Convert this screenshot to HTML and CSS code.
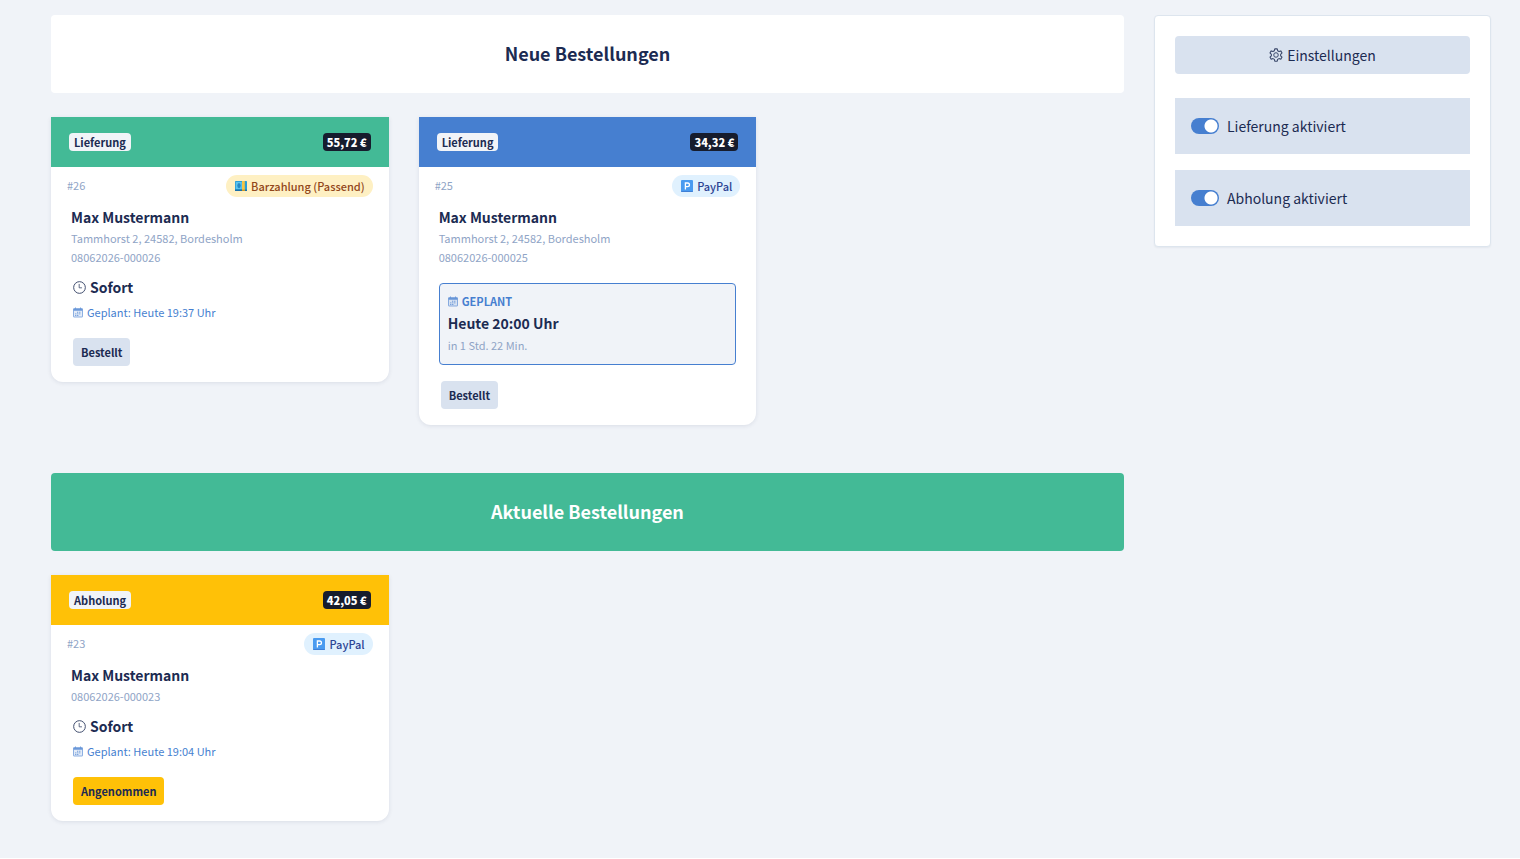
FILE: index.html
```html
<!DOCTYPE html>
<html lang="de">
<head>
<meta charset="utf-8">
<meta name="viewport" content="width=device-width, initial-scale=1">
<title>Bestellungen</title>
<link rel="stylesheet" href="styles.css">
</head>
<body>
<svg class="sprite" aria-hidden="true">
  <symbol id="clock" viewBox="0 0 16 16"><circle cx="8" cy="8" r="7.2" fill="none" stroke="currentColor" stroke-width="1.2"/><path d="M7.6 3.6V8.4H11" fill="none" stroke="currentColor" stroke-width="1"/></symbol>
  <symbol id="calendar" viewBox="0 0 16 16"><rect x=".8" y="1.8" width="14.4" height="13.4" rx=".6" fill="currentColor" fill-opacity=".18" stroke="currentColor" stroke-width="1.2"/><path d="M1 2h14v3.2H1z" fill="currentColor"/><path d="M4 0v3M12 0v3" stroke="currentColor" stroke-width="1.4"/><path d="M6.4 7.6h2M9.8 7.6h2M3.4 10.2h2M6.6 10.2h2M9.8 10.2h2M3.4 12.8h2M6.6 12.8h2" stroke="currentColor" stroke-width="1.5"/></symbol>
  <symbol id="gear" viewBox="0 0 16 16"><path d="M6.6 1h2.8l.5 2.1 1.5.9 2.1-.7 1.4 2.4-1.6 1.5v1.7l1.6 1.5-1.4 2.4-2.1-.7-1.5.9-.5 2.1H6.6l-.5-2.1-1.5-.9-2.1.7-1.4-2.4 1.6-1.5V7.2L1.100 5.700l1.400-2.400 2.100.7 1.500-.9z" fill="none" stroke="currentColor" stroke-width="1.2" stroke-linejoin="round"/><circle cx="8" cy="8" r="2.600" fill="none" stroke="currentColor" stroke-width="1.100"/></symbol>
  <symbol id="note" viewBox="0 0 12 10"><rect width="12" height="10" rx=".6" fill="#2a9fd8"/><path d="M0 8.600h12V10H0z" fill="#1b6fa8"/><path d="M.8 1h6v7h-6z" fill="#5cc3ee"/><ellipse cx="4" cy="4.600" rx="1.700" ry="2.600" fill="#2589c4"/><path d="M7 0h2.800v10H7z" fill="#f6c644"/><path d="M7 8.600h2.800V10H7z" fill="#c99724"/></symbol>
  <symbol id="parking" viewBox="0 0 12 12"><rect width="12" height="12" rx="1" fill="#4a9bf0"/><path d="M0 11h12v0a1 1 0 0 1-1 1H1a1 1 0 0 1-1-1z" fill="#3f7fd6"/><path d="M4.400 9.400V3h2.200a1.800 1.800 0 0 1 0 3.700H4.400" fill="none" stroke="#fff" stroke-width="1.300"/></symbol>
</svg>
<div class="page">
  <main class="orders">
    <section class="group">
      <h2 class="banner">Neue Bestellungen</h2>
      <div class="cards">
        <article class="card">
          <header class="card-head green"><span class="chip">Lieferung</span><span class="chip price">55,72 €</span></header>
          <div class="meta"><span>#26</span><span class="pay cash"><svg class="note"><use href="#note"/></svg>Barzahlung (Passend)</span></div>
          <div class="body">
            <h3 class="name">Max Mustermann</h3>
            <p class="info">Tammhorst 2, 24582, Bordesholm</p>
            <p class="info">08062026-000026</p>
            <p class="when"><svg class="clock"><use href="#clock"/></svg>Sofort</p>
            <p class="plan"><svg class="cal"><use href="#calendar"/></svg>Geplant: Heute 19:37 Uhr</p>
            <button class="status" type="button">Bestellt</button>
          </div>
        </article>
        <article class="card">
          <header class="card-head blue"><span class="chip">Lieferung</span><span class="chip price">34,32 €</span></header>
          <div class="meta"><span>#25</span><span class="pay paypal"><svg class="parking"><use href="#parking"/></svg>PayPal</span></div>
          <div class="body">
            <h3 class="name">Max Mustermann</h3>
            <p class="info">Tammhorst 2, 24582, Bordesholm</p>
            <p class="info">08062026-000025</p>
            <div class="slot">
              <p class="slot-label"><svg class="cal"><use href="#calendar"/></svg>GEPLANT</p>
              <p class="slot-time">Heute 20:00 Uhr</p>
              <p class="slot-rest">in 1 Std. 22 Min.</p>
            </div>
            <button class="status" type="button">Bestellt</button>
          </div>
        </article>
      </div>
    </section>
    <section class="group">
      <h2 class="banner current">Aktuelle Bestellungen</h2>
      <div class="cards">
        <article class="card">
          <header class="card-head yellow"><span class="chip">Abholung</span><span class="chip price">42,05 €</span></header>
          <div class="meta"><span>#23</span><span class="pay paypal"><svg class="parking"><use href="#parking"/></svg>PayPal</span></div>
          <div class="body">
            <h3 class="name">Max Mustermann</h3>
            <p class="info">08062026-000023</p>
            <p class="when"><svg class="clock"><use href="#clock"/></svg>Sofort</p>
            <p class="plan"><svg class="cal"><use href="#calendar"/></svg>Geplant: Heute 19:04 Uhr</p>
            <button class="status accepted" type="button">Angenommen</button>
          </div>
        </article>
      </div>
    </section>
  </main>
  <aside class="panel">
    <button class="settings" type="button"><svg class="gear"><use href="#gear"/></svg>Einstellungen</button>
    <div class="toggles">
      <label class="toggle"><input type="checkbox" role="switch" checked>Lieferung aktiviert</label>
      <label class="toggle"><input type="checkbox" role="switch" checked>Abholung aktiviert</label>
    </div>
  </aside>
</div>
</body>
</html>
```
FILE: styles.css
```css
* { box-sizing: border-box; }
body, h2, h3, p { margin: 0; }
body {
  background: #fff;
  color: #1c2b52;
  font-family: "Noto Sans CJK SC", "Noto Sans", sans-serif;
  font-size: 14px;
}
button { border: 0; color: inherit; font-family: inherit; cursor: pointer; }
svg { flex: none; }
.sprite { position: absolute; width: 0; height: 0; }

.page {
  display: flex;
  align-items: flex-start;
  gap: 30px;
  padding: 15px 29px 37px 51px;
  background: #f0f3f8;
}
.orders { flex: 1; display: grid; gap: 48px; }
.banner {
  padding: 23px 24px 25px;
  border-radius: 4px;
  background: #fff;
  font-size: 18px;
  line-height: 30px;
  text-align: center;
}
.current { background: #43ba96; color: #fff; }
.cards {
  display: grid;
  grid-template-columns: repeat(3, minmax(0, 1fr));
  align-items: start;
  gap: 30px;
  margin-top: 24px;
}

.card {
  border-radius: 0 0 12px 12px;
  background: #fff;
  box-shadow: 0 1px 4px rgba(28, 43, 82, .1);
}
.card-head {
  display: flex;
  justify-content: space-between;
  padding: 16px 18px;
}
.green { background: #43ba96; }
.blue { background: #467fd0; }
.yellow { background: #ffc107; }
.chip {
  padding: 0 5px;
  border-radius: 4px;
  background: #f1f4f8;
  font-size: 11px;
  font-weight: 700;
  line-height: 18px;
}
.price { padding: 0 4px; background: #161c2d; color: #fff; font-weight: 900; }
.meta {
  display: flex;
  justify-content: space-between;
  padding: 8px 16px 0;
  color: #8fa4c6;
  font-size: 11px;
  line-height: 20px;
}
.pay {
  display: flex;
  align-items: center;
  gap: 4px;
  padding: 0 8px 0 9px;
  border-radius: 11px;
  font-weight: 500;
  line-height: 22px;
}
.cash { background: #fef0c3; color: #92471a; }
.paypal { background: #e0f1fe; color: #2c4494; }
.note { width: 12px; height: 10px; }
.parking { width: 12px; height: 12px; }

.body { padding: 8px 20px 16px; }
.name { font-size: 14px; line-height: 24px; }
.info { color: #8fa4c6; font-size: 11px; line-height: 19px; }
.when {
  display: flex;
  align-items: center;
  gap: 4px;
  margin-top: 8px;
  padding-left: 2px;
  font-size: 14px;
  font-weight: 700;
  line-height: 24px;
}
.plan {
  display: flex;
  align-items: center;
  gap: 4px;
  margin-top: 3px;
  padding-left: 2px;
  color: #467fd0;
  font-size: 11px;
  line-height: 20px;
}
.clock { width: 13px; height: 13px; opacity: .85; }
.cal { width: 10px; height: 11px; opacity: .8; }
.status {
  display: block;
  margin: 16px 0 0 2px;
  padding: 0 8px;
  border-radius: 4px;
  background: #d9e2ef;
  font-size: 11px;
  font-weight: 700;
  line-height: 28px;
}
.accepted { background: #ffc107; }

.slot {
  margin-top: 16px;
  padding: 8px 8px 10px;
  border: 1px solid #467fd0;
  border-radius: 4px;
  background: #f0f3f8;
  line-height: 18px;
}
.slot-label {
  display: flex;
  align-items: center;
  gap: 4px;
  color: #467fd0;
  font-size: 11px;
  font-weight: 700;
}
.slot-time { font-size: 14px; font-weight: 700; line-height: 26px; }
.slot-rest { color: #8fa4c6; font-size: 11px; }

.panel {
  display: grid;
  gap: 24px;
  width: 337px;
  padding: 20px;
  border: 1px solid #dde5ee;
  border-radius: 4px;
  background: #fff;
  box-shadow: 0 1px 2px rgba(28, 43, 82, .06);
}
.settings {
  display: flex;
  align-items: center;
  justify-content: center;
  gap: 4px;
  padding: 0;
  border-radius: 4px;
  background: #d9e2ef;
  font-size: 14px;
  line-height: 38px;
}
.gear { width: 14px; height: 14px; opacity: .85; }
.toggles { display: grid; gap: 16px; }
.toggle {
  display: flex;
  align-items: center;
  gap: 8px;
  padding: 16px;
  background: #d9e2ef;
  font-size: 14px;
  line-height: 24px;
}
.toggle input {
  appearance: none;
  width: 28px;
  height: 16px;
  margin: 0;
  border-radius: 8px;
  background: radial-gradient(circle at 20px 8px, #fff 6px, #467fd0 7px);
}
```
